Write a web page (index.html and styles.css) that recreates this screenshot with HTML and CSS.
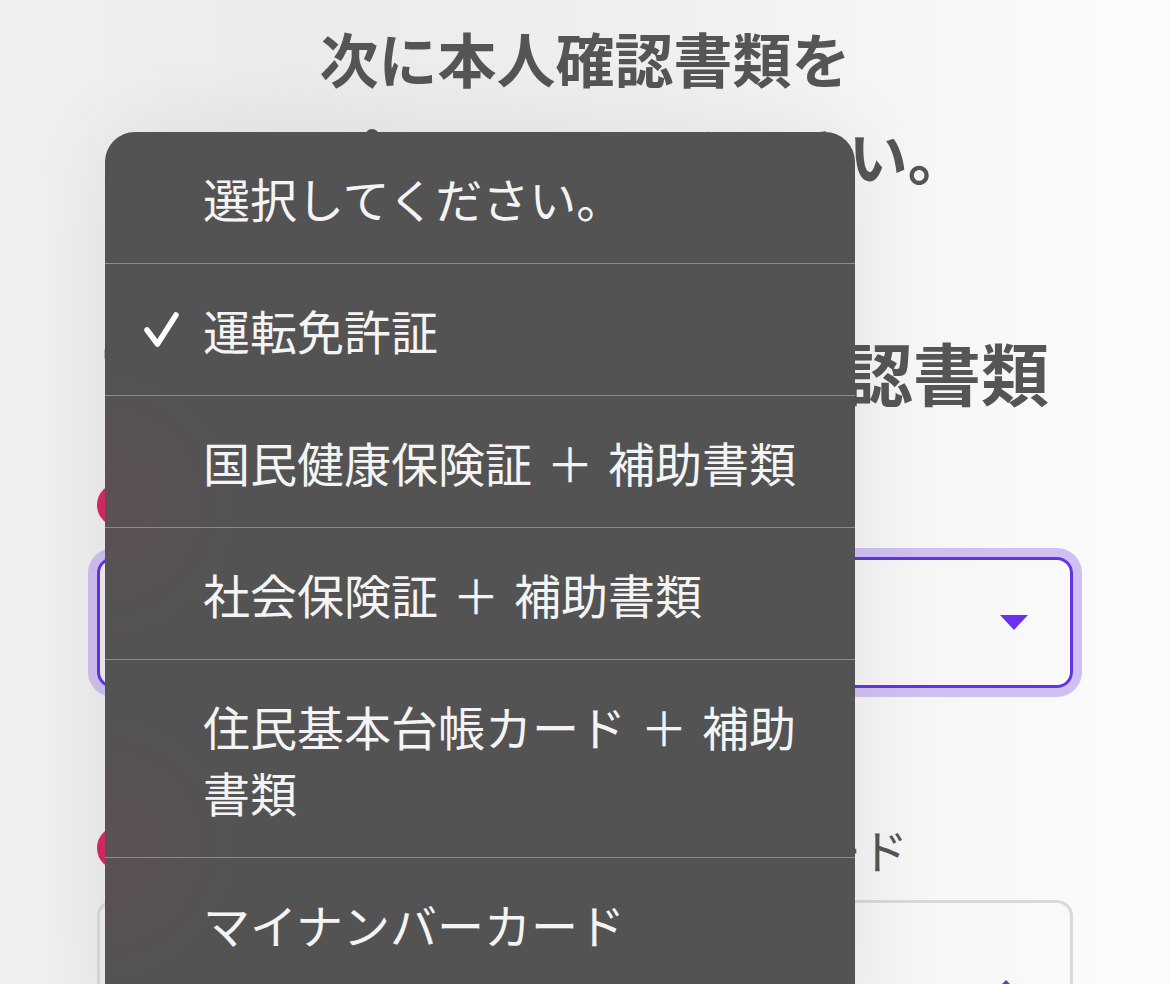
FILE: index.html
```html
<!DOCTYPE html>
<html lang="ja">
<head>
    <meta charset="UTF-8">
    <meta name="viewport" content="width=device-width, initial-scale=1.0">
    <title>本人確認書類の選択</title>
    <link rel="stylesheet" href="styles.css">
</head>
<body>
    <main class="page">
        <h1 class="lead">次に本人確認書類を<br>アップロードしてください。</h1>

        <h2 class="section-title">アップロードする本人確認書類</h2>

        <div class="field">
            <div class="field-label"><span class="badge"></span>本人確認書類</div>
            <div class="select is-focused">
                <span class="select-value"></span>
                <svg class="select-arrow" width="28" height="15" viewBox="0 0 28 15"><path d="M0 0 H28 L14 15 Z" fill="#6a2ff0"/></svg>
            </div>
        </div>

        <div class="field">
            <div class="field-label"><span class="badge"></span>補助書類またはマイナンバーカード</div>
            <div class="select">
                <span class="select-value"></span>
                <svg class="select-arrow select-arrow-up" width="20" height="10" viewBox="0 0 20 10"><path d="M10 0 L20 10 H0 Z" fill="#6a2ff0"/></svg>
            </div>
        </div>
    </main>

    <!-- native picker drawn over the page -->
    <ul class="picker">
        <li class="picker-row"><span class="picker-check"></span><span class="picker-text">選択してください。</span></li>
        <li class="picker-row is-selected">
            <span class="picker-check">
                <svg width="40" height="40" viewBox="0 0 40 40"><path d="M6 20 L16.5 34 L35 5" fill="none" stroke="#fff" stroke-width="5.5" stroke-linecap="round" stroke-linejoin="round"/></svg>
            </span>
            <span class="picker-text">運転免許証</span>
        </li>
        <li class="picker-row"><span class="picker-check"></span><span class="picker-text">国民健康保険証 ＋ 補助書類</span></li>
        <li class="picker-row"><span class="picker-check"></span><span class="picker-text">社会保険証 ＋ 補助書類</span></li>
        <li class="picker-row"><span class="picker-check"></span><span class="picker-text">住民基本台帳カード ＋ 補助書類</span></li>
        <li class="picker-row"><span class="picker-check"></span><span class="picker-text">マイナンバーカード</span></li>
    </ul>
</body>
</html>
```

FILE: styles.css
```css
html, body {
    margin: 0;
    height: 984px;
    overflow: hidden;
}
body {
    font-family: "Noto Sans CJK JP", "Noto Sans", sans-serif;
    color: #555;
    background: linear-gradient(90deg, #f0f0f0 0%, #ebebeb 25%, #efefef 55%, #fcfcfc 100%);
}
.page {
    padding: 0 97px;
}
.lead {
    margin: 9px 0 0;
    font-size: 59px;
    line-height: 97px;
    font-weight: 700;
    text-align: center;
    color: #555;
}
.section-title {
    margin: 120px 0 0;
    font-size: 68px;
    line-height: 98px;
    font-weight: 700;
    color: #555;
    white-space: nowrap;
}
.field {
    margin-top: 54px;
}
.field + .field {
    margin-top: 130px;
}
.field-label {
    display: flex;
    align-items: center;
    gap: 16px;
    height: 60px;
    font-size: 47px;
    white-space: nowrap;
}
.badge {
    width: 44px;
    height: 44px;
    border-radius: 50%;
    background: #d52a66;
    flex: none;
}
.select {
    margin-top: 22px;
    height: 125px;
    border: 3px solid #d9d9d9;
    border-radius: 16px;
    display: flex;
    justify-content: space-between;
    align-items: center;
    padding: 0 42px 0 30px;
}
.select.is-focused {
    border-color: #6531e8;
    box-shadow: 0 0 0 9px #cfc0f1;
}
.select-arrow-up {
    align-self: flex-start;
    margin-top: 77px;
    margin-right: 12px;
}

.picker {
    position: absolute;
    left: 105px;
    top: 132px;
    width: 750px;
    height: 900px;
    margin: 0;
    padding: 0;
    list-style: none;
    border-radius: 30px 30px 0 0;
    background:
        radial-gradient(circle at 0 373px, rgba(214, 42, 102, 0.07), rgba(214, 42, 102, 0) 150px),
        radial-gradient(circle at 0 716px, rgba(214, 42, 102, 0.07), rgba(214, 42, 102, 0) 150px),
        #535353;
    box-shadow: 0 0 90px rgba(0, 0, 0, 0.07);
    color: #f4f4f4;
}
.picker-row {
    display: flex;
    padding: 33px 30px 32px 0;
    border-bottom: 1px solid #8b8b8b;
    font-size: 47px;
    line-height: 66px;
    word-spacing: 4px;
}
.picker-check {
    flex: none;
    width: 98px;
    display: flex;
    align-items: center;
}
.picker-check svg {
    margin-left: 36px;
}
.picker-text {
    flex: 1;
}
```
